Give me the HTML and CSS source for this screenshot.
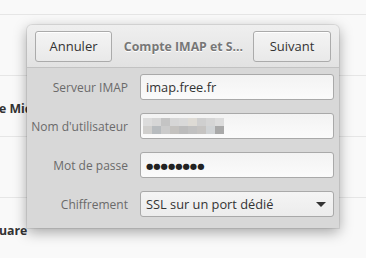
FILE: index.html
```html
<!DOCTYPE html>
<html lang="fr">
<head>
    <meta charset="UTF-8">
    <title>Compte IMAP et SMTP</title>
    <link rel="stylesheet" href="styles.css">
</head>
<body>

    <!-- account list behind the sheet -->
    <div class="account-list">
        <div class="list-top"></div>
        <div class="list-row"></div>
        <div class="list-row"><span class="row-name">e Microsoft</span></div>
        <div class="list-row"></div>
        <div class="list-row"><span class="row-name">uare</span></div>
    </div>

    <div class="sheet">
        <div class="sheet-header">
            <button class="btn">Annuler</button>
            <span class="sheet-title">Compte IMAP et S...</span>
            <button class="btn">Suivant</button>
        </div>
        <div class="sheet-body">
            <label class="field-label">Serveur IMAP</label>
            <div class="entry">imap.free.fr</div>

            <label class="field-label">Nom d'utilisateur</label>
            <div class="entry">
                <div class="blur" id="blur"></div>
            </div>

            <label class="field-label">Mot de passe</label>
            <div class="entry password">●●●●●●●●</div>

            <label class="field-label">Chiffrement</label>
            <div class="entry combo">
                <span>SSL sur un port dédié</span>
                <span class="arrow"></span>
            </div>
        </div>
    </div>

    <script>
        // pixelated user name
        const shades = [
            "#dcdcdc", "#d6d6d6", "#c4c4c4", "#d6d6d6", "#d9d9d9", "#dedbd5", "#cfcfcf", "#d5d5d5", "#dcdcdc",
            "#d0cfcd", "#b8bcbf", "#cbcbcb", "#c4c2bf", "#bcbcbc", "#c1c1c1", "#c6c4c2", "#d0d3d5", "#a9a9a9"
        ];
        const blur = document.getElementById("blur");
        shades.forEach(c => {
            const cell = document.createElement("span");
            cell.style.background = c;
            blur.appendChild(cell);
        });
    </script>
</body>
</html>
```

FILE: styles.css
```css
body {
    margin: 0;
    background: #f9f9f9;
    font-family: "Open Sans", "DejaVu Sans", sans-serif;
    font-size: 12.3px;
    overflow: hidden;
}

.account-list {
    display: flex;
    flex-direction: column;
}

.list-top {
    height: 14px;
}

.list-row {
    height: 61px;
    border-top: 1px solid #e6e6e6;
    box-sizing: border-box;
    padding-top: 24px;
}

.row-name {
    font-weight: bold;
    color: #333;
    margin-left: -1px;
}

/* Sheet dialog */
.sheet {
    position: absolute;
    top: 25px;
    left: 27px;
    width: 312px;
    height: 203px;
    background: #d8d8d8;
    border-radius: 5px 5px 0 0;
    box-shadow: 0 4px 14px rgba(0, 0, 0, 0.35), 0 0 0 1px rgba(0, 0, 0, 0.08);
    overflow: hidden;
}

.sheet-header {
    display: flex;
    align-items: center;
    justify-content: space-between;
    height: 42px;
    padding: 0 8px;
    background: linear-gradient(#efefef, #e2e2e2);
    border-bottom: 1px solid #c2c2c2;
}

.btn {
    height: 31px;
    padding: 0 10px;
    font-family: inherit;
    font-size: 13px;
    color: #333;
    background: linear-gradient(#f4f4f4, #e9e9e9);
    border: 1px solid #ababab;
    border-radius: 3px;
    box-shadow: inset 0 1px 0 #fff;
}

.btn:first-child {
    width: 77px;
}

.btn:last-child {
    width: 78px;
}

.sheet-title {
    font-weight: bold;
    color: #777;
    text-shadow: 0 1px 0 #fff;
    margin-left: 2px;
}

.sheet-body {
    display: grid;
    grid-template-columns: 101px 194px;
    column-gap: 12px;
    row-gap: 13px;
    padding: 6px 5px 0 0;
    align-items: center;
}

.field-label {
    text-align: right;
    color: #6a6a6a;
    white-space: nowrap;
    font-size: 12px;
}

.entry {
    height: 26px;
    box-sizing: border-box;
    border: 1px solid #a9a9a9;
    border-radius: 3px;
    background: linear-gradient(#f3f3f3, #fbfbfb);
    padding: 0 5px;
    display: flex;
    align-items: center;
    color: #333;
    font-size: 12.8px;
}

.blur {
    display: grid;
    grid-template-columns: repeat(9, 9px);
    grid-auto-rows: 8px;
    margin-left: -3px;
}

.password {
    font-size: 8.4px;
    color: #222;
}

.combo {
    justify-content: space-between;
    background: linear-gradient(#f4f4f4, #ececec);
}

.arrow {
    width: 0;
    height: 0;
    border-left: 5px solid transparent;
    border-right: 5px solid transparent;
    border-top: 5px solid #333;
    margin-right: 2px;
}
```
